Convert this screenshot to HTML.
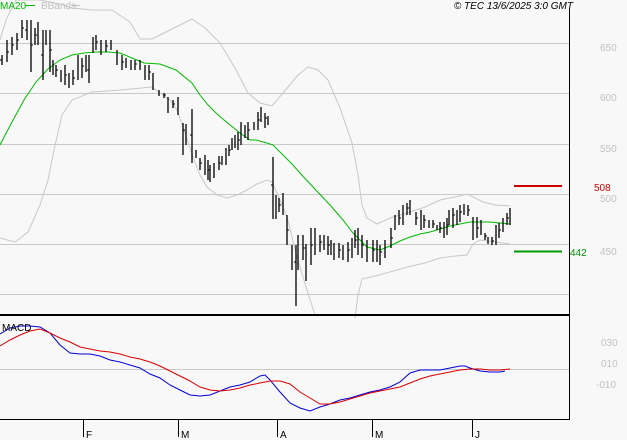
<!DOCTYPE html>
<html><head><meta charset="utf-8"><style>
html,body{margin:0;padding:0;background:#f8f8f8;}
svg{display:block;font-family:"Liberation Sans",sans-serif;}
</style></head><body>
<svg width="627" height="440" viewBox="0 0 627 440" xmlns="http://www.w3.org/2000/svg">
<rect width="627" height="440" fill="#f8f8f8"/>
<g stroke="#c8c8c8" stroke-width="1">
<line x1="0" y1="43.5" x2="569" y2="43.5"/>
<line x1="0" y1="93.5" x2="569" y2="93.5"/>
<line x1="0" y1="144.5" x2="569" y2="144.5"/>
<line x1="0" y1="194.5" x2="569" y2="194.5"/>
<line x1="0" y1="244.5" x2="569" y2="244.5"/>
<line x1="0" y1="294.5" x2="569" y2="294.5"/>
<line x1="0" y1="369.5" x2="569" y2="369.5"/>
</g>
<g fill="none" stroke="#c8c8c8" stroke-width="1">
<polyline points="0,40 6,20 16,0 18,0 40,0 60,4 72,8 92,10 112,10 130,22 140,39 152,39 170,30 192,19 205,28 220,43 235,68 248,93 260,103 272,106 288,87 298,75 308,67 318,70 328,80 340,108 352,143 358,175 362,205 367,218 377,224 390,218 407,213 425,207 440,200 455,197 467,194 483,202 495,205 510,206"/>
<polyline points="0,238 15,242 28,232 40,205 48,180 54,150 62,115 72,100 92,92 120,90 152,87 160,93 170,100 177,110 185,133 193,157 200,175 207,187 217,195 227,198 237,195 247,190 257,184 267,180 272,182 278,195 287,217 297,257 307,290 315,315"/>
<polyline points="355,318 358,295 362,279 375,276 390,272 407,267 425,263 440,258 455,256 467,255 473,244 480,240 495,242 510,244"/>
</g>
<polyline fill="none" stroke="#00bb00" stroke-width="1" points="0,145 12,122 24,100 36,82 48,69 60,60 72,55 84,53 96,52 108,52 120,53 132,58 144,63 160,64 176,70 192,83 200,95 208,105 216,113 224,120 240,133 250,140 256,140 267,143 273,145 283,155 292,164 300,173 313,187 330,205 343,220 353,233 367,247 380,250 390,246 400,241 410,237 420,234 430,232 440,229 450,226 460,224 470,222 480,222 490,222 500,223 510,224"/>
<path fill="none" stroke="#000" stroke-width="1.3" d="
M2 55V65M7 40V62M12 37V55M17 33V50M22 20V38M27 20V40M31 20V72M35 28V45M38 22V45M43 30V80M46 30V45M50 30V72M53 60V75M56 65V77M61 70V82M65 65V85M69 73V88M73 70V85M78 55V80M82 58V78M86 55V72M89 55V83M93 37V53M96 35V50M101 40V55M106 40V52M111 40V50M117 50V65M122 55V70M126 58V68M131 60V70M135 60V70M140 60V70M145 65V80M149 65V80M153 73V90M159 90V96M164 93V98M168 97V113M173 100V108M178 97V115M183 123V155M186 124V145M192 109V163M196 150V158M200 158V170M205 155V175M208 160V180M210 165V182M214 163V178M219 156V170M222 156V165M226 148V165M229 145V156M232 138V150M235 135V148M238 132V150M241 122V145M245 125V138M248 122V140M254 122V130M258 112V130M261 107V122M265 113V128M268 116V125M273 157V219M276 195V219M279 198V212M283 193V215M287 215V245M292 245V270M296 245V306M298 235V270M303 235V260M306 244V281M311 228V265M315 228V255M320 235V252M324 235V250M328 236V255M331 240V255M334 243V260M339 243V258M343 245V260M348 242V262M352 238V258M355 230V248M358 228V255M362 235V258M367 240V262M373 240V262M377 240V262M380 245V265M385 240V258M391 228V248M395 215V230M399 210V225M403 205V225M407 203V215M410 200V215M416 212V225M421 210V230M424 215V228M429 220V228M433 220V228M437 225V230M440 222V233M444 222V238M447 218V235M449 210V225M453 208V228M457 210V225M460 205V222M464 204V215M468 205V216M473 217V240M477 217V238M481 220V235M485 233V240M488 237V244M492 237V245M496 225V245M499 223V238M503 218V232M507 213V225M510 208V225"/>
<path fill="none" stroke="#000" stroke-width="1" d="
M2 60h-2M7 52h2M12 45h2M17 40h2M22 28h2M27 30h-2M31 45h2M35 35h2M43 55h-2M50 50h2M56 70h2M65 75h2M73 78h2M82 66h2M89 70h-2M96 42h2M106 46h2M122 62h2M135 64h2M149 72h2M164 95h2M173 104h2M183 130h2M192 135h-2M200 163h2M208 170h2M219 163h2M229 150h2M238 140h2M248 130h2M258 120h2M265 118h2M273 185h-2M279 205h2M287 230h2M296 262h-2M303 248h2M311 245h2M320 242h2M328 245h2M339 250h2M348 250h2M355 240h2M362 245h2M373 250h2M380 252h2M391 238h2M399 218h2M407 208h2M416 218h2M424 220h2M433 224h2M440 228h2M447 225h2M453 215h2M460 212h2M468 210h2M477 228h2M485 236h2M492 241h2M499 230h2M507 218h2"/>
<line x1="514" y1="186" x2="562" y2="186" stroke="#cc0000" stroke-width="2"/>
<line x1="514" y1="251.5" x2="562" y2="251.5" stroke="#009900" stroke-width="2"/>
<text x="594" y="191" font-size="10" fill="#cc0000">508</text>
<text x="570" y="256" font-size="10" fill="#009900">442</text>
<polyline fill="none" stroke="#0000dd" stroke-width="1" points="0,334 10,328 20,326 30,326 40,327 50,333 60,345 70,353 80,354 90,354 100,356 110,360 120,362 130,365 140,368 150,374 160,378 170,385 180,390 190,395 200,396 210,395 220,391 230,387 240,385 250,382 260,376 265,375 270,380 280,392 290,403 300,408 310,411 320,407 330,404 340,400 350,398 360,395 370,392 380,390 390,387 400,382 410,373 420,370 430,370 440,370 450,368 460,366 465,366 470,368 480,371 490,372 500,372 505,371"/>
<polyline fill="none" stroke="#dd0000" stroke-width="1" points="0,346 10,340 20,335 30,331 40,329 50,333 60,338 70,342 80,347 90,349 100,351 110,352 120,354 130,357 140,359 150,362 160,366 170,371 180,376 190,381 200,387 210,390 220,391 230,390 240,388 250,385 260,383 270,381 280,381 290,384 300,392 310,398 320,404 330,404 340,402 350,399 360,396 370,393 380,391 390,389 400,387 410,383 420,379 430,376 440,374 450,372 460,370 470,369 480,369 490,370 500,370 510,369"/>
<line x1="569.5" y1="9" x2="569.5" y2="419" stroke="#000" stroke-width="1"/>
<line x1="0" y1="315" x2="570" y2="315" stroke="#000" stroke-width="2"/>
<line x1="0" y1="419.5" x2="570" y2="419.5" stroke="#000" stroke-width="1"/>
<g stroke="#000" stroke-width="1">
<line x1="83.5" y1="420" x2="83.5" y2="437"/>
<line x1="178.5" y1="420" x2="178.5" y2="437"/>
<line x1="277.5" y1="420" x2="277.5" y2="437"/>
<line x1="372.5" y1="420" x2="372.5" y2="437"/>
<line x1="472.5" y1="420" x2="472.5" y2="437"/>
</g>
<g font-size="10" fill="#000">
<text x="86" y="438">F</text>
<text x="181" y="438">M</text>
<text x="280" y="438">A</text>
<text x="375" y="438">M</text>
<text x="475" y="438">J</text>
<text x="2" y="331">MACD</text>
<text x="573" y="9" text-anchor="end" font-style="italic">© TEC 13/6/2025 3:0 GMT</text>
</g>
<text x="0" y="9" font-size="10" fill="#00bb00">MA20</text>
<line x1="25" y1="5.5" x2="35" y2="5.5" stroke="#00bb00" stroke-width="1"/>
<text x="41" y="9" font-size="10" fill="#c0c0c0">BBands</text>
<line x1="72" y1="5.5" x2="80" y2="5.5" stroke="#c0c0c0" stroke-width="1"/>
<g font-size="10" fill="#c0c0c0">
<text x="600" y="51">650</text>
<text x="600" y="101">600</text>
<text x="600" y="152">550</text>
<text x="600" y="202">500</text>
<text x="600" y="255">450</text>
<text x="601" y="346">030</text>
<text x="601" y="367">010</text>
<text x="596" y="388">-010</text>
</g>
</svg>
</body></html>
